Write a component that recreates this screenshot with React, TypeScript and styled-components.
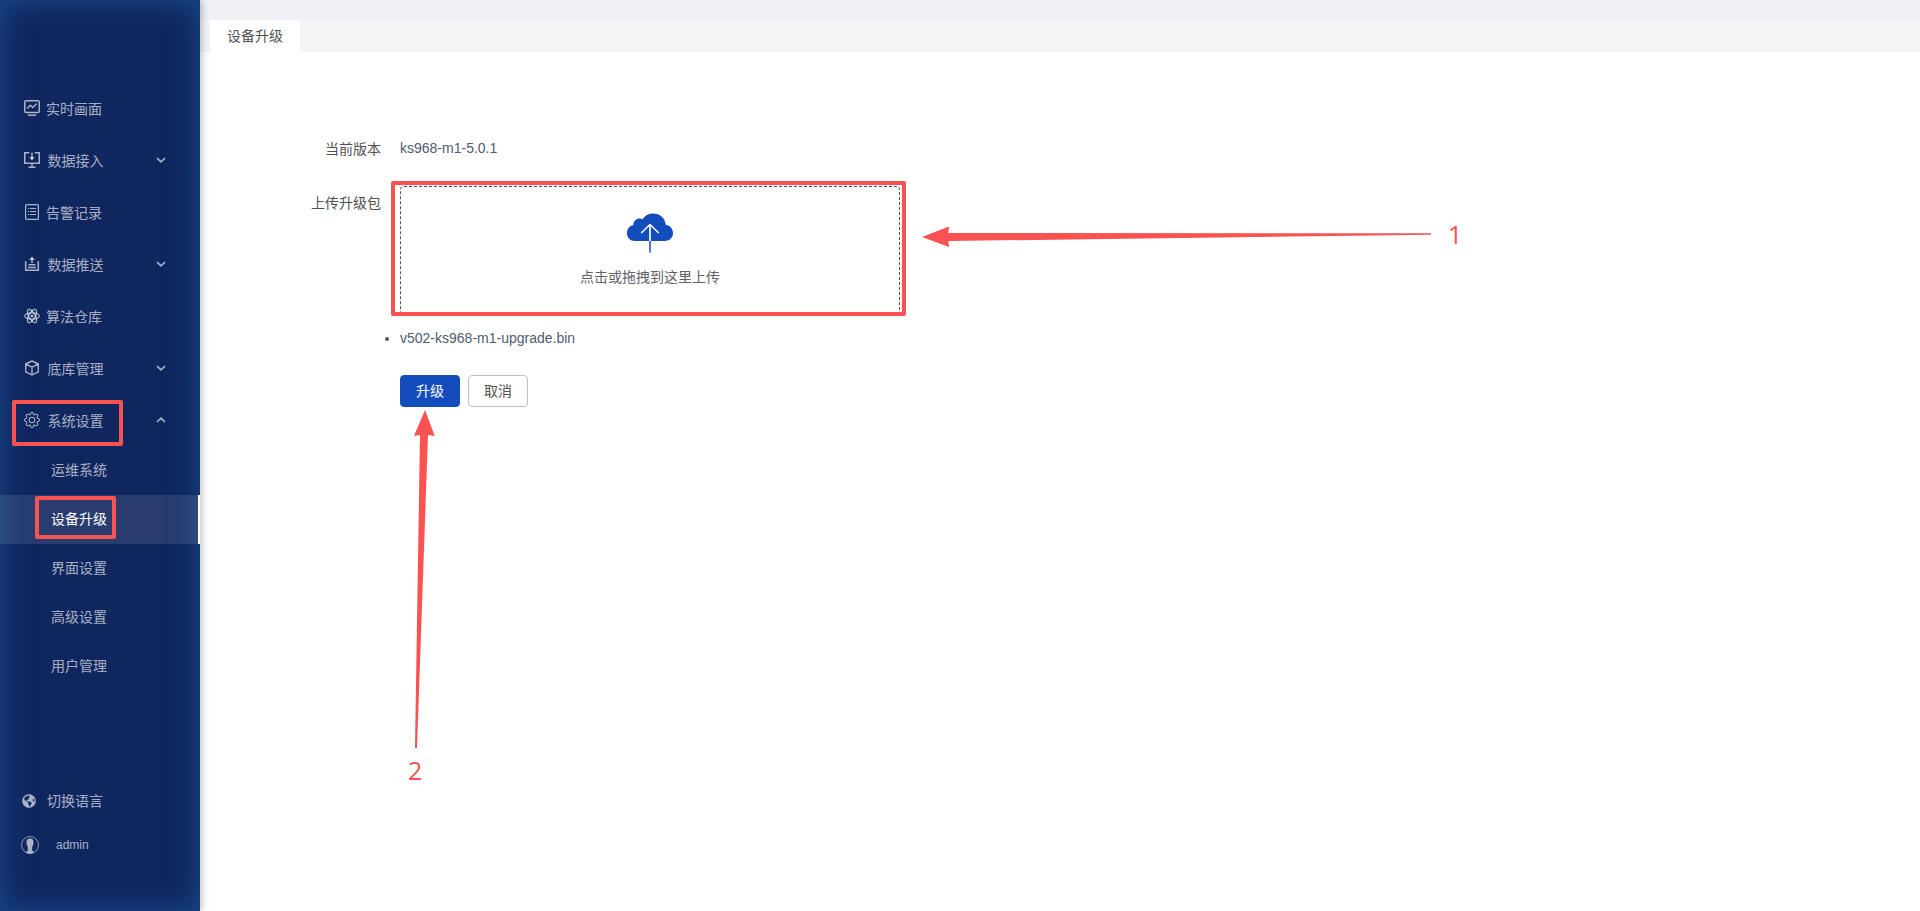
import React from 'react';
import styled, { createGlobalStyle, css } from 'styled-components';
import { BsGear } from 'react-icons/bs';
import { FaGlobeAmericas } from 'react-icons/fa';

const RED = '#fa5151';

const GlobalStyle = createGlobalStyle`
  * { box-sizing: border-box; }
  body {
    margin: 0;
    overflow: hidden;
    background: #fff;
    color: #515a6e;
    font: 14px/20px "Liberation Sans", "Noto Sans CJK SC", sans-serif;
  }
`;

const Layout = styled.div`
  position: relative;
  display: flex;
  width: 100vw;
  height: 100vh;
`;

const Sidebar = styled.aside`
  z-index: 1;
  display: flex;
  flex: none;
  flex-direction: column;
  width: 200px;
  padding: 82px 0 44px;
  background: #10265f;
  box-shadow: inset 0 0 30px 0 #1a4c8c, 1px 0 8px rgba(0, 0, 0, 0.3);
  color: rgba(255, 255, 255, 0.65);
`;

const Menu = styled.nav`
  display: flex;
  flex: 1;
  flex-direction: column;
`;

const MenuItem = styled.div<{ $group?: boolean }>`
  display: flex;
  align-items: center;
  gap: ${(p) => (p.$group ? 7.5 : 6)}px;
  height: 52px;
  padding: 0 34px 0 24px;

  > svg { flex: none; }
`;

const MenuLabel = styled.span`
  flex: 1;
  padding-top: 1px;
`;

const SubItem = styled.div<{ $active?: boolean }>`
  height: 49px;
  padding-left: 51px;
  line-height: 49px;
  ${(p) =>
    p.$active &&
    css`
      border-right: 2px solid #fff;
      background: rgba(255, 255, 255, 0.1);
      color: #fff;
    `}
`;

const FooterItem = styled.div<{ $gap: number; $indent: number; $small?: boolean }>`
  display: flex;
  align-items: center;
  gap: ${(p) => p.$gap}px;
  height: 44px;
  padding-left: ${(p) => p.$indent}px;
  font-size: ${(p) => (p.$small ? 12 : 14)}px;
`;

const Main = styled.main`
  flex: 1;
  min-width: 0;
`;

const TopStrip = styled.div`
  height: 20px;
  background: #eff1f6;
`;

const TabBar = styled.div`
  display: flex;
  height: 32px;
  padding-left: 10px;
  background: #f4f4f4;
`;

const Tab = styled.div`
  width: 90px;
  border-radius: 4px 4px 0 0;
  background: #fff;
  color: #515151;
  line-height: 32px;
  text-align: center;
`;

const Form = styled.section`
  display: grid;
  grid-template-columns: 181px 500px;
  column-gap: 19px;
  padding-top: 86px;
`;

const Label = styled.div<{ $top: number }>`
  padding-top: ${(p) => p.$top}px;
  color: #515151;
  text-align: right;
`;

const Version = styled.div`
  height: 48px;
`;

const DropZone = styled.div`
  display: flex;
  flex-direction: column;
  align-items: center;
  height: 129px;
  padding-top: 26px;
  border: 1px dashed #515151;
  border-radius: 4px;
  color: #606266;
`;

const DropHint = styled.div`
  margin-top: 14px;
`;

const FileList = styled.ul`
  margin: 13px 0 0;
  padding: 0;
`;

const Actions = styled.div`
  display: flex;
  gap: 8px;
  margin-top: 27px;
`;

const Button = styled.button<{ $primary?: boolean }>`
  width: 60px;
  height: 32px;
  padding: 0;
  border: 1px solid ${(p) => (p.$primary ? '#124cbd' : '#bfbfbf')};
  border-radius: 4px;
  background: ${(p) => (p.$primary ? '#124cbd' : '#fff')};
  color: ${(p) => (p.$primary ? '#fff' : '#515151')};
  font: inherit;
`;

const Highlight = styled.div<{ $x: number; $y: number; $w: number; $h: number }>`
  position: absolute;
  z-index: 2;
  left: ${(p) => p.$x}px;
  top: ${(p) => p.$y}px;
  width: ${(p) => p.$w}px;
  height: ${(p) => p.$h}px;
  border: 4px solid ${RED};
  border-radius: 2px;
`;

const Arrow = styled.svg<{ $x: number; $y: number }>`
  position: absolute;
  left: ${(p) => p.$x}px;
  top: ${(p) => p.$y}px;
  fill: ${RED};
`;

const Step = styled.span<{ $x: number; $y: number }>`
  position: absolute;
  left: ${(p) => p.$x}px;
  top: ${(p) => p.$y}px;
  color: ${RED};
  font: 25px/30px "Open Sans", "Noto Sans", sans-serif;
`;

const line = { fill: 'none', stroke: 'currentColor', strokeWidth: 1.5 };

const MonitorIcon = () => (
  <svg width="16" height="16" viewBox="0 0 16 16" {...line}>
    <rect x=".75" y=".75" width="14.5" height="11.7" rx="1.2" />
    <path d="M3.2 8.5 6.2 5.2 8.7 7.5 12.6 3.7M4 15.2h8" />
  </svg>
);

const ImportIcon = () => (
  <svg width="16" height="16" viewBox="0 0 16 16" {...line}>
    <path d="M5.2.75H.75v10.5h14.5V.75H10.8M8 .5v7M8 11.3V15M4.5 15.2h7" />
    <path d="M5.2 5h5.6L8 8.3z" fill="currentColor" stroke="none" />
  </svg>
);

const RecordIcon = () => (
  <svg width="16" height="16" viewBox="0 0 16 16" {...line} strokeWidth={1.2}>
    <rect x="1.6" y=".6" width="12.8" height="14.8" rx="1" />
    <path d="M4 4.5h1M6 4.5h6M4 7.5h1M6 7.5h6M4 10.5h1M6 10.5h6" />
  </svg>
);

const PushIcon = () => (
  <svg width="16" height="16" viewBox="0 0 16 16" {...line}>
    <path d="M1.7 5v9.3h12.6V5M8 7V2M4.5 8.7h7M4 11.5h8" />
    <path d="M8 .5 11 4H5z" fill="currentColor" stroke="none" />
  </svg>
);

const AtomIcon = () => (
  <svg width="16" height="16" viewBox="0 0 16 16" {...line} strokeWidth={1.2}>
    <ellipse cx="8" cy="8" rx="7.4" ry="3.2" />
    <ellipse cx="8" cy="8" rx="7.4" ry="3.2" transform="rotate(60 8 8)" />
    <ellipse cx="8" cy="8" rx="7.4" ry="3.2" transform="rotate(120 8 8)" />
    <circle cx="8" cy="8" r="1.5" fill="currentColor" stroke="none" />
  </svg>
);

const CubeIcon = () => (
  <svg width="16" height="16" viewBox="0 0 16 16" {...line} strokeWidth={1.4} strokeLinejoin="round">
    <path d="M8 1 14.3 4v7.8L8 15l-6.3-3.2V4zM1.9 4.2 8 7.2l6.1-3M8 7.2V15" />
  </svg>
);

const Chevron = ({ up }: { up?: boolean }) => (
  <svg width="10" height="6" viewBox="0 0 10 6" {...line} strokeWidth={1.7}>
    <path d={up ? 'M1 5 5 1.2 9 5' : 'M1 1 5 4.8 9 1'} />
  </svg>
);

const UserIcon = () => (
  <svg width="18" height="18" viewBox="0 0 18 18" fill="currentColor">
    <circle cx="9" cy="9" r="8.5" fill="none" stroke="currentColor" strokeWidth=".8" />
    <path d="M9 2.5c2.8 0 3.7 1.7 3.5 4.5-.1 1.9-.8 2.9-1.3 3.8v3.2c0 1.2 1 1.6 2 2.2a8 8 0 0 1-8.4 0c1-.6 2-1 2-2.2v-3.2C6.3 9.9 5.6 8.9 5.5 7 5.3 4.2 6.2 2.5 9 2.5z" />
  </svg>
);

const CloudIcon = () => (
  <svg width="46" height="40" viewBox="0 0 46 40" fill="none">
    <path fill="#124cbd" d="M8 28C3 28 0 24.5 0 20c0-4 2.5-7.2 6.3-8C6.5 8 9.3 5.5 12.5 5.5c1.2 0 2.2.2 3 .7C18 2.4 21.5.5 26 .5c7 0 12.2 4.8 12.7 11.3C43 12.5 46 16 46 20c0 4.5-3.5 8-8.5 8z" />
    <path stroke="#4b76cd" strokeWidth="2" d="M23 28v11.5" />
    <path stroke="#dbe5f7" strokeWidth="2" d="M23 12v16" />
    <path stroke="#fff" strokeWidth="1.5" d="M14.2 20 23 11.5 31.8 20" />
  </svg>
);

const menu = [
  { label: '实时画面', icon: <MonitorIcon /> },
  { label: '数据接入', icon: <ImportIcon />, group: true },
  { label: '告警记录', icon: <RecordIcon /> },
  { label: '数据推送', icon: <PushIcon />, group: true },
  { label: '算法仓库', icon: <AtomIcon /> },
  { label: '底库管理', icon: <CubeIcon />, group: true },
  { label: '系统设置', icon: <BsGear size={16} />, group: true, open: true },
];

const subMenu = ['运维系统', '设备升级', '界面设置', '高级设置', '用户管理'];

export default function App() {
  return (
    <Layout>
      <GlobalStyle />
      <Sidebar>
        <Menu>
          {menu.map((item) => (
            <MenuItem key={item.label} $group={item.group}>
              {item.icon}
              <MenuLabel>{item.label}</MenuLabel>
              {item.group && <Chevron up={item.open} />}
            </MenuItem>
          ))}
          {subMenu.map((label) => (
            <SubItem key={label} $active={label === '设备升级'}>{label}</SubItem>
          ))}
        </Menu>
        <FooterItem $gap={11} $indent={22}><FaGlobeAmericas size={14} />切换语言</FooterItem>
        <FooterItem $gap={17} $indent={21} $small><UserIcon />admin</FooterItem>
      </Sidebar>
      <Main>
        <TopStrip />
        <TabBar><Tab>设备升级</Tab></TabBar>
        <Form>
          <Label $top={1}>当前版本</Label>
          <Version>ks968-m1-5.0.1</Version>
          <Label $top={7}>上传升级包</Label>
          <div>
            <DropZone>
              <CloudIcon />
              <DropHint>点击或拖拽到这里上传</DropHint>
            </DropZone>
            <FileList><li>v502-ks968-m1-upgrade.bin</li></FileList>
            <Actions>
              <Button $primary>升级</Button>
              <Button>取消</Button>
            </Actions>
          </div>
        </Form>
      </Main>
      <Highlight $x={12} $y={400} $w={111} $h={46} />
      <Highlight $x={35} $y={496} $w={81} $h={43} />
      <Highlight $x={391} $y={181} $w={515} $h={135} />
      <Arrow $x={922} $y={226} width="510" height="22">
        <path d="M0 11 27 .5 26.3 7 509 7.2v1.6L26.3 15 27 21z" />
      </Arrow>
      <Arrow $x={413} $y={410} width="22" height="339">
        <path d="M12 0 21.7 26 15 25 4 338H2L7 25 1 26z" />
      </Arrow>
      <Step $x={1448} $y={219}>1</Step>
      <Step $x={408} $y={755}>2</Step>
    </Layout>
  );
}
